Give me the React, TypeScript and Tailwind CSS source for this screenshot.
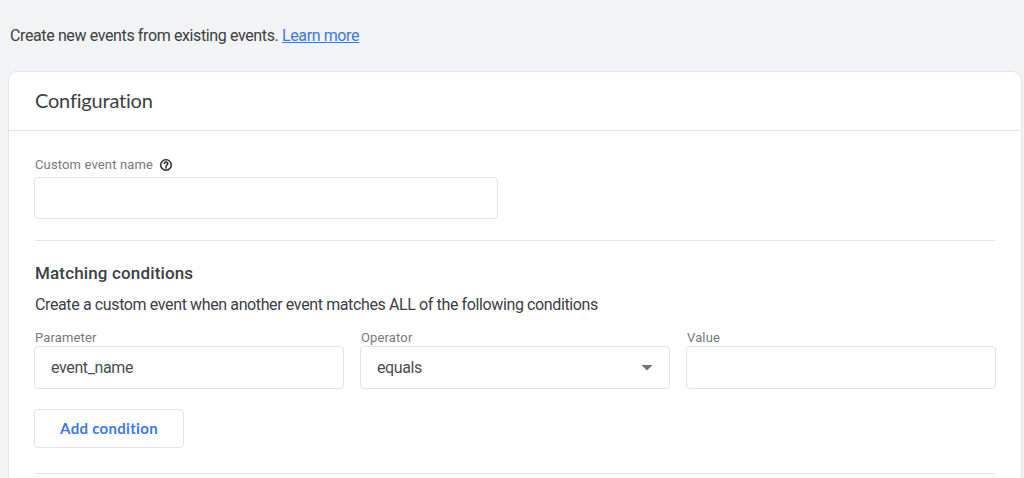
import type { ReactNode } from "react";

function Field({ label, children }: { label: string; children?: ReactNode }) {
  return (
    <div className="w-[310px]">
      <div className="h-[16px] pl-px text-[13px] leading-[16px] tracking-[0.14px] text-[#76797d]">
        {label}
      </div>
      <div className="flex h-[43px] items-center justify-between rounded-[4px] border border-[#e2e3e6] px-4 text-[16px] tracking-[-0.38px] text-[#4a4d51]">
        {children}
      </div>
    </div>
  );
}

export default function App() {
  return (
    <div className="h-[478px] w-[1024px] overflow-hidden bg-[#f1f3f4] font-['Roboto',sans-serif] text-[#3c4043]">
      <p className="pt-[25px] pl-[10px] text-[16px] leading-[21px] tracking-[-0.38px]">
        Create new events from existing events.{" "}
        <a className="text-[#3b78e7] underline" href="#">
          Learn more
        </a>
      </p>
      <div className="mt-[25px] ml-[8px] h-[460px] w-[1014px] rounded-[9px] border border-[#e2e4e7] bg-white">
        <div className="flex h-[59px] items-center border-b border-[#e2e4e7] pb-[2px] pl-[26px]">
          <h1 className="font-['Lato',sans-serif] text-[20px] leading-[20px] tracking-[-0.2px]">
            Configuration
          </h1>
        </div>
        <div className="px-[25px]">
          <div className="flex items-center gap-[6px] pt-[26px] pl-px">
            <span className="text-[13px] leading-[16px] tracking-[0.14px] text-[#76797d]">
              Custom event name
            </span>
            <svg className="size-[14px]" viewBox="0 0 24 24" fill="#202124" stroke="#202124" strokeWidth="0.6">
              <path d="M11 18h2v-2h-2v2zm1-16C6.480 2 2 6.480 2 12s4.480 10 10 10 10-4.480 10-10S17.520 2 12 2zm0 18c-4.410 0-8-3.590-8-8s3.590-8 8-8 8 3.590 8 8-3.590 8-8 8zm0-14c-2.210 0-4 1.790-4 4h2c0-1.100.9-2 2-2s2 .9 2 2c0 2-3 1.750-3 5h2c0-2.250 3-2.500 3-5 0-2.210-1.790-4-4-4z" />
            </svg>
          </div>
          <div className="mt-[4px] h-[42px] w-[464px] rounded-[4px] border border-[#e2e3e6]" />
          <div className="mt-[21px] mr-px ml-px border-t border-[#e2e3e6]" />
          <h2 className="mt-[22px] pl-px text-[17px] leading-[20px] font-medium tracking-[0.15px]">
            Matching conditions
          </h2>
          <p className="mt-[12px] pl-px text-[16px] leading-[20px] tracking-[-0.38px]">
            Create a custom event when another event matches ALL of the following conditions
          </p>
          <div className="mt-[15px] flex gap-[16px]">
            <Field label="Parameter">event_name</Field>
            <Field label="Operator">
              equals
              <svg className="h-[6px] w-[12px]" viewBox="0 0 12 6" fill="#6f7276">
                <path d="M0.5 0h11L6 5.500z" />
              </svg>
            </Field>
            <Field label="Value" />
          </div>
          <button className="mt-[20px] h-[39px] w-[150px] rounded-[4px] border border-[#e2e3e6] font-['Lato',sans-serif] text-[15px] font-bold tracking-[0.3px] text-[#3b78e7]">
            Add condition
          </button>
          <div className="mt-[25px] mr-px ml-px border-t border-[#e2e3e6]" />
        </div>
      </div>
    </div>
  );
}
